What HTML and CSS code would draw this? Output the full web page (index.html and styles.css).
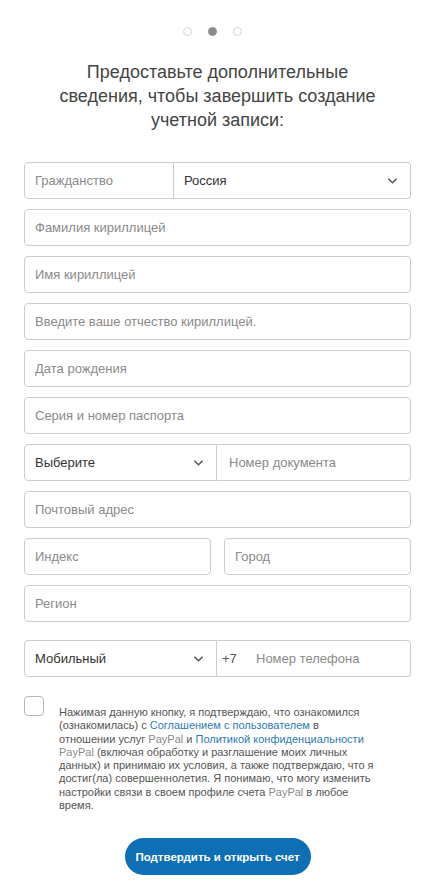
FILE: index.html
```html
<!DOCTYPE html>
<html lang="ru">
<head>
    <meta charset="UTF-8">
    <meta name="viewport" content="width=device-width, initial-scale=1.0">
    <title>PayPal — дополнительные сведения</title>
    <link rel="stylesheet" href="styles.css">
</head>
<body>

<div class="page">
    <!-- Step indicator -->
    <div class="steps">
        <span class="dot"></span>
        <span class="dot active"></span>
        <span class="dot"></span>
    </div>

    <h1 class="title">Предоставьте дополнительные сведения, чтобы завершить создание учетной записи:</h1>

    <form class="form">
        <div class="row joined">
            <div class="field label-cell">Гражданство</div>
            <div class="field select grow">
                <span class="value">Россия</span>
                <svg class="chevron" viewBox="0 0 12 8"><path d="M1.5 1.5 L6 6 L10.5 1.5"/></svg>
            </div>
        </div>

        <input class="field" type="text" placeholder="Фамилия кириллицей">
        <input class="field" type="text" placeholder="Имя кириллицей">
        <input class="field" type="text" placeholder="Введите ваше отчество кириллицей.">
        <input class="field" type="text" placeholder="Дата рождения">
        <input class="field" type="text" placeholder="Серия и номер паспорта">

        <div class="row joined">
            <div class="field select half">
                <span class="value">Выберите</span>
                <svg class="chevron" viewBox="0 0 12 8"><path d="M1.5 1.5 L6 6 L10.5 1.5"/></svg>
            </div>
            <input class="field grow doc" type="text" placeholder="Номер документа">
        </div>

        <input class="field" type="text" placeholder="Почтовый адрес">

        <div class="row split">
            <input class="field" type="text" placeholder="Индекс">
            <input class="field" type="text" placeholder="Город">
        </div>

        <input class="field" type="text" placeholder="Регион">

        <div class="row joined phone-row">
            <div class="field select half">
                <span class="value">Мобильный</span>
                <svg class="chevron" viewBox="0 0 12 8"><path d="M1.5 1.5 L6 6 L10.5 1.5"/></svg>
            </div>
            <div class="field phone grow">
                <span class="code">+7</span>
                <input type="text" placeholder="Номер телефона">
            </div>
        </div>

        <!-- Agreement -->
        <label class="agree">
            <span class="checkbox"></span>
            <span class="agree-text">Нажимая данную кнопку, я подтверждаю, что ознакомился<br>
                (ознакомилась) с <a href="#">Соглашением с пользователем</a> в<br>
                отношении услуг <span class="brand">PayPal</span> и <a href="#">Политикой конфиденциальности</a><br>
                <span class="brand">PayPal</span> (включая обработку и разглашение моих личных<br>
                данных) и принимаю их условия, а также подтверждаю, что я<br>
                достиг(ла) совершеннолетия. Я понимаю, что могу изменить<br>
                настройки связи в своем профиле счета <span class="brand">PayPal</span> в любое<br>
                время.</span>
        </label>

        <button type="button" class="submit">Подтвердить и открыть счет</button>
    </form>
</div>

</body>
</html>
```

FILE: styles.css
```css
body {
    margin: 0;
    background-color: #fff;
    font-family: 'Liberation Sans', Arial, sans-serif;
    color: #333;
}

.page {
    padding: 27px 23px 0 24px;
}

.steps {
    display: flex;
    justify-content: center;
    gap: 16px;
    height: 10px;
    padding-right: 10px;
}

.dot {
    width: 7px;
    height: 7px;
    border: 1px solid #d4d4d4;
    border-radius: 50%;
    box-sizing: content-box;
}

.dot.active {
    background-color: #8c8c8c;
    border-color: #8c8c8c;
}

.title {
    max-width: 330px;
    margin: 23px auto 30px;
    font-size: 18px;
    font-weight: normal;
    line-height: 24px;
    text-align: center;
    color: #444;
}

.form {
    display: flex;
    flex-direction: column;
    gap: 10px;
}

.field {
    box-sizing: border-box;
    height: 37px;
    width: 100%;
    margin: 0;
    padding: 0 10px;
    border: 1px solid #cdcdcd;
    border-radius: 4px;
    background: #fff;
    font-family: inherit;
    font-size: 13px;
    color: #333;
    outline: none;
}

.field::placeholder,
.phone input::placeholder {
    color: #8a8a8a;
}

.row {
    display: flex;
}

.row.split {
    gap: 13px;
}

.row.joined .field:first-child {
    border-top-right-radius: 0;
    border-bottom-right-radius: 0;
}

.row.joined .field + .field {
    border-left: none;
    border-top-left-radius: 0;
    border-bottom-left-radius: 0;
}

.label-cell {
    width: 150px;
    flex-shrink: 0;
    display: flex;
    align-items: center;
    color: #8a8a8a;
}

.grow {
    flex: 1;
    min-width: 0;
}

.half {
    width: 193px;
    flex-shrink: 0;
}

.select {
    display: flex;
    align-items: center;
    justify-content: space-between;
    padding-right: 12px;
}

.chevron {
    width: 11px;
    height: 8px;
    fill: none;
    stroke: #555;
    stroke-width: 1.6;
}

.doc {
    padding-left: 12px;
}

.phone-row {
    margin-top: 8px;
}

.phone {
    display: flex;
    align-items: center;
    padding-left: 5px;
}

.code {
    width: 34px;
    flex-shrink: 0;
    color: #555;
}

.phone input {
    flex: 1;
    min-width: 0;
    border: none;
    outline: none;
    padding: 0;
    font-family: inherit;
    font-size: 13px;
}

.agree {
    display: flex;
    gap: 15px;
    margin-top: 9px;
}

.checkbox {
    width: 20px;
    height: 20px;
    flex-shrink: 0;
    box-sizing: border-box;
    border: 1px solid #b5b5b5;
    border-radius: 4px;
}

.agree-text {
    padding-top: 10px;
    font-size: 11px;
    line-height: 13.3px;
    color: #555;
}

.agree-text a {
    color: #2c7bb3;
    text-decoration: none;
}

.brand {
    color: #8a8a8a;
}

.submit {
    align-self: center;
    width: 186px;
    height: 37px;
    margin-top: 16px;
    border: none;
    border-radius: 19px;
    background-color: #0f6fb5;
    color: #fff;
    font-family: inherit;
    font-size: 11.5px;
    font-weight: bold;
    cursor: pointer;
}
```
